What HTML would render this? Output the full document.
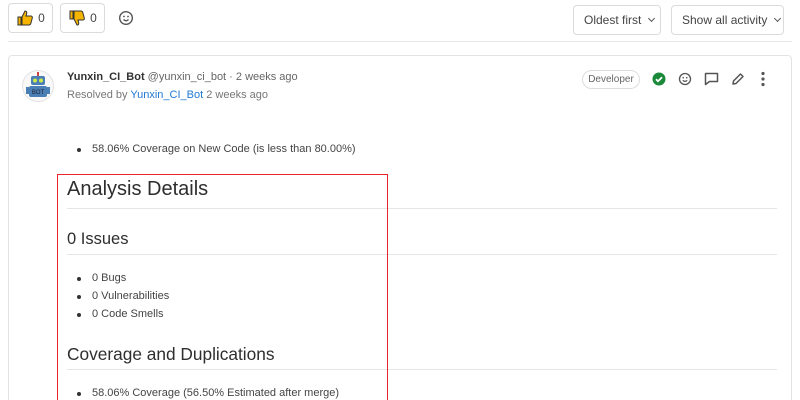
<!DOCTYPE html>
<html><head><meta charset="utf-8"><style>
*{margin:0;padding:0;box-sizing:border-box}
html,body{width:800px;height:400px;overflow:hidden}
body{background:#fff;font-family:"Liberation Sans",sans-serif;color:#333;position:relative}
.a{position:absolute}
.btn{position:absolute;border:1px solid #dbdbdb;border-radius:4px;background:#fff;height:30px;font-size:12px;color:#444;display:flex;align-items:center;justify-content:center;white-space:nowrap}
.t{font-size:11px;white-space:nowrap}
.hr{position:absolute;left:67px;width:710px;height:1px;background:#e6e6e6}
.li{position:absolute;left:79px;font-size:11px;color:#444;white-space:nowrap}
.li:before{content:"";position:absolute;left:-2px;top:5px;width:4px;height:4px;border-radius:50%;background:#333}
.li span{margin-left:13px}
.chev{display:inline-block;width:5px;height:5px;border-right:1.3px solid #555;border-bottom:1.3px solid #555;transform:rotate(45deg);margin-left:8px;margin-top:-4px}
.r{position:absolute;background:#e8232a}
</style></head><body>
<div class="btn" style="left:8px;top:3px;width:45px">
<svg width="18" height="18" viewBox="0 0 18 18"><path d="M2 8h3v8H2zM6 8l3-6c1.5 0 2 1 1.7 2.5L10 7h5c1 0 1.6 1 1.3 2l-1.5 5.5c-.3 1-1 1.5-2 1.5H6z" fill="#f4b400" stroke="#333" stroke-width="1"/></svg><span style="margin-left:4px">0</span></div>
<div class="btn" style="left:60px;top:3px;width:45px">
<svg width="18" height="18" viewBox="0 0 18 18" style="transform:scaleY(-1)"><path d="M2 8h3v8H2zM6 8l3-6c1.5 0 2 1 1.7 2.5L10 7h5c1 0 1.6 1 1.3 2l-1.5 5.5c-.3 1-1 1.5-2 1.5H6z" fill="#f4b400" stroke="#333" stroke-width="1"/></svg><span style="margin-left:4px">0</span></div>
<svg class="a" style="left:118px;top:10px" width="16" height="16" viewBox="0 0 16 16"><circle cx="8" cy="8" r="6.3" fill="none" stroke="#555" stroke-width="1.4"/><circle cx="6" cy="6.5" r=".9" fill="#555"/><circle cx="10" cy="6.5" r=".9" fill="#555"/><path d="M5.5 9.5q2.5 2.5 5 0" fill="none" stroke="#555" stroke-width="1.3"/></svg>
<div class="btn" style="left:573px;top:5px;width:88px;justify-content:flex-start;padding-left:10px">Oldest first<span class="chev"></span></div>
<div class="btn" style="left:671px;top:5px;width:113px;justify-content:flex-start;padding-left:10px">Show all activity<span class="chev"></span></div>
<div class="a" style="left:8px;top:41px;width:784px;height:1px;background:#e8e8e8"></div>
<div class="a" style="left:8px;top:55px;width:784px;height:360px;border:1px solid #e3e3e3;border-radius:4px"></div>
<div class="a" style="left:22px;top:70px;width:32px;height:32px;border-radius:50%;border:1px solid #e3e3e3;background:#f8f8f8"></div>
<svg class="a" style="left:24px;top:70px" width="28" height="32" viewBox="0 0 28 32"><rect x="13" y="2" width="2" height="4" fill="#c44"/><rect x="7" y="6" width="14" height="9" rx="2" fill="#4a7fb5"/><circle cx="11" cy="10.5" r="2" fill="#cde84a"/><circle cx="17" cy="10.5" r="2" fill="#cde84a"/><rect x="5" y="16" width="18" height="11" rx="2" fill="#4a7fb5"/><rect x="2" y="17" width="3" height="7" fill="#4a7fb5"/><rect x="23" y="17" width="3" height="7" fill="#4a7fb5"/><text x="14" y="24" font-size="6" text-anchor="middle" fill="#223" font-family="Liberation Sans">BOT</text></svg>
<div class="a t" style="left:67px;top:71px;color:#666"><b style="color:#333">Yunxin_CI_Bot</b> @yunxin_ci_bot · 2 weeks ago</div>
<div class="a t" style="left:67px;top:89px;color:#777">Resolved by <span style="color:#1f78d1">Yunxin_CI_Bot</span> 2 weeks ago</div>
<div class="a" style="left:582px;top:70px;width:58px;height:19px;border:1px solid #ddd;border-radius:10px;font-size:10px;color:#666;text-align:center;line-height:17px">Developer</div>
<svg class="a" style="left:652px;top:72px" width="14" height="14" viewBox="0 0 14 14"><circle cx="7" cy="7" r="6.5" fill="#1a8a3a"/><path d="M4 7.2l2 2 4-4" stroke="#fff" stroke-width="1.8" fill="none"/></svg>
<svg class="a" style="left:678px;top:72px" width="14" height="14" viewBox="0 0 16 16"><circle cx="8" cy="8" r="6.3" fill="none" stroke="#555" stroke-width="1.5"/><circle cx="6" cy="6.5" r=".9" fill="#555"/><circle cx="10" cy="6.5" r=".9" fill="#555"/><path d="M5.5 9.5q2.5 2.5 5 0" fill="none" stroke="#555" stroke-width="1.3"/></svg>
<svg class="a" style="left:704px;top:72px" width="15" height="14" viewBox="0 0 15 14"><path d="M1.5 1.5h12v8h-8l-4 3z" fill="none" stroke="#555" stroke-width="1.5" stroke-linejoin="round"/></svg>
<svg class="a" style="left:731px;top:72px" width="14" height="14" viewBox="0 0 14 14"><path d="M2 12l.5-3L9.5 2l2.5 2.5-7 7z" fill="none" stroke="#555" stroke-width="1.5" stroke-linejoin="round"/></svg>
<svg class="a" style="left:760px;top:71px" width="6" height="16"><circle cx="3" cy="2.5" r="1.6" fill="#555"/><circle cx="3" cy="8" r="1.6" fill="#555"/><circle cx="3" cy="13.5" r="1.6" fill="#555"/></svg>
<div class="li" style="top:143px"><span>58.06% Coverage on New Code (is less than 80.00%)</span></div>
<div class="a" style="left:67px;top:178px;font-size:20px;color:#2e2e2e">Analysis Details</div>
<div class="hr" style="top:208px"></div>
<div class="a" style="left:67px;top:230px;font-size:16.5px;color:#2e2e2e">0 Issues</div>
<div class="hr" style="top:254px"></div>
<div class="li" style="top:272px"><span>0 Bugs</span></div>
<div class="li" style="top:290px"><span>0 Vulnerabilities</span></div>
<div class="li" style="top:308px"><span>0 Code Smells</span></div>
<div class="a" style="left:67px;top:344px;font-size:17.3px;color:#2e2e2e">Coverage and Duplications</div>
<div class="hr" style="top:369px"></div>
<div class="li" style="top:387px"><span>58.06% Coverage (56.50% Estimated after merge)</span></div>
<div class="r" style="left:57px;top:174px;width:331px;height:1px"></div>
<div class="r" style="left:57px;top:174px;width:1px;height:226px"></div>
<div class="r" style="left:387px;top:174px;width:1px;height:226px"></div>
</body></html>
